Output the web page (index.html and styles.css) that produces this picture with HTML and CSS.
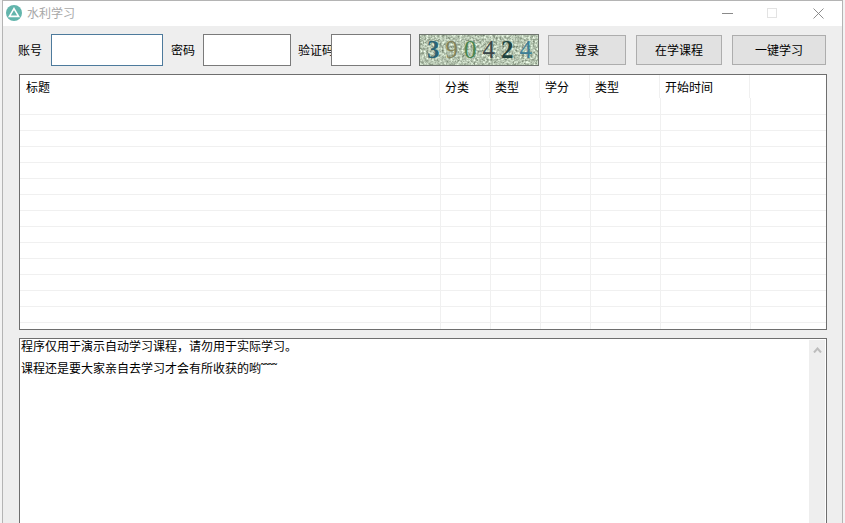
FILE: index.html
```html
<!DOCTYPE html>
<html lang="zh">
<head>
<meta charset="utf-8">
<title>水利学习</title>
<link rel="stylesheet" href="styles.css">
</head>
<body>
<div class="window">
  <header class="titlebar">
    <svg class="app-icon" width="16" height="16" viewBox="0 0 16 16"><circle cx="8" cy="8" r="8" fill="#62b5ac"/><path d="M8 3.6 L12.6 11.4 H3.4 Z" fill="none" stroke="#fff" stroke-width="1.6"/></svg>
    <span class="app-title">水利学习</span>
    <div class="controls">
      <svg class="ctl ctl-min" width="11" height="11" viewBox="0 0 11 11"><path d="M0 5.5H11" stroke="#8a8a8a"/></svg>
      <svg class="ctl ctl-max" width="11" height="11" viewBox="0 0 11 11"><rect x=".5" y=".5" width="9" height="9" fill="none" stroke="#e3e3e3"/></svg>
      <svg class="ctl ctl-close" width="11" height="11" viewBox="0 0 11 11"><path d="M.5 .5 10.5 10.5M10.5 .5 .5 10.5" stroke="#808080" stroke-width=".9"/></svg>
    </div>
  </header>
  <div class="toolbar">
    <label class="lbl lbl-account">账号</label>
    <input class="field field-account" type="text">
    <label class="lbl lbl-pass">密码</label>
    <input class="field field-pass" type="password">
    <label class="lbl lbl-code">验证码</label>
    <input class="field field-code" type="text">
    <div class="captcha">
      <svg class="noise" width="118" height="30"><filter id="n" x="0" y="0" width="100%" height="100%" color-interpolation-filters="sRGB"><feTurbulence type="fractalNoise" baseFrequency="0.45" numOctaves="3" seed="4"/><feColorMatrix values=".75 0 0 0 .34  .75 0 0 0 .4  .75 0 0 0 .32  0 0 0 0 1"/></filter><rect width="118" height="30" filter="url(#n)"/></svg>
      <span class="d d1">3</span><span class="d d2">9</span><span class="d d3">0</span><span class="d d4">4</span><span class="d d5">2</span><span class="d d6">4</span>
    </div>
    <button class="btn btn-login">登录</button>
    <button class="btn btn-course">在学课程</button>
    <button class="btn btn-study">一键学习</button>
  </div>
  <section class="grid-view">
    <div class="row head"><div>标题</div><div>分类</div><div>类型</div><div>学分</div><div>类型</div><div>开始时间</div><div></div></div>
    <div class="row first"><div></div><div></div><div></div><div></div><div></div><div></div><div></div></div>
    <div class="row"><div></div><div></div><div></div><div></div><div></div><div></div><div></div></div>
    <div class="row"><div></div><div></div><div></div><div></div><div></div><div></div><div></div></div>
    <div class="row"><div></div><div></div><div></div><div></div><div></div><div></div><div></div></div>
    <div class="row"><div></div><div></div><div></div><div></div><div></div><div></div><div></div></div>
    <div class="row"><div></div><div></div><div></div><div></div><div></div><div></div><div></div></div>
    <div class="row"><div></div><div></div><div></div><div></div><div></div><div></div><div></div></div>
    <div class="row"><div></div><div></div><div></div><div></div><div></div><div></div><div></div></div>
    <div class="row"><div></div><div></div><div></div><div></div><div></div><div></div><div></div></div>
    <div class="row"><div></div><div></div><div></div><div></div><div></div><div></div><div></div></div>
    <div class="row"><div></div><div></div><div></div><div></div><div></div><div></div><div></div></div>
    <div class="row"><div></div><div></div><div></div><div></div><div></div><div></div><div></div></div>
    <div class="row"><div></div><div></div><div></div><div></div><div></div><div></div><div></div></div>
    <div class="row"><div></div><div></div><div></div><div></div><div></div><div></div><div></div></div>
    <div class="row"><div></div><div></div><div></div><div></div><div></div><div></div><div></div></div>
  </section>
  <section class="log">
    <div class="log-text">
      <p>程序仅用于演示自动学习课程，请勿用于实际学习。</p>
      <p>课程还是要大家亲自去学习才会有所收获的哟<span class="tilde">˜˜˜˜</span></p>
    </div>
    <div class="scrollbar">
      <svg width="9" height="6" viewBox="0 0 9 6"><path d="M1 5.5 4.5 1.5 8 5.5" fill="none" stroke="#bdbdbd" stroke-width="2"/></svg>
    </div>
  </section>
</div>
</body>
</html>
```
FILE: styles.css
```css
* { box-sizing: border-box; }
html, body { margin: 0; height: 523px; overflow: hidden; }
body { background: #f3f3f3; font: 12px "Noto Sans CJK SC", "Liberation Sans", sans-serif; color: #000; }
.window { margin-left: 2px; width: 841px; height: 523px; background: #eeeeee; border: 1px solid #b4b4b4; border-width: 1px 1px 0 1px; overflow: hidden; }
.titlebar { height: 25px; background: #fff; display: flex; align-items: center; padding: 0 0 1px 3px; }
.app-icon { flex: none; }
.app-title { margin-left: 5px; color: #a8a8a8; line-height: 16px; }
.controls { margin-left: auto; display: flex; align-items: center; }
.ctl { display: block; }
.ctl-min { margin-right: 34px; }
.ctl-max { margin-right: 35px; }
.ctl-close { margin-right: 18px; }
.toolbar { height: 48px; display: flex; align-items: center; padding: 0 0 0 15px; }
.lbl { line-height: 16px; white-space: nowrap; }
.lbl-account { width: 24px; margin-right: 9px; }
.lbl-pass { width: 24px; margin: 0 8px; }
.lbl-code { width: 33px; margin: 0 0 0 7px; }
.field { height: 32px; background: #fff; border: 1px solid #7a7a7a; padding: 0; margin: 0; outline: 0; position: relative; }
.field-account { width: 112px; border-color: #4d7a9c; }
.field-pass { width: 88px; }
.field-code { width: 80px; }
.captcha { position: relative; width: 120px; height: 32px; margin-left: 8px; margin-right: 9px; border: 1px solid #6f756f; background: #c3d2c0; display: flex; align-items: center; padding-left: 7px; gap: 6.5px; font: 25px/30px "Liberation Serif", serif; overflow: hidden; }
.noise { position: absolute; left: 0; top: 0; }
.d { position: relative; width: 12px; text-align: center; }
.d1 { color: #2b6475; font-weight: bold; }
.d2 { color: #83835a; }
.d3 { color: #4a8550; }
.d4 { color: #3b464a; }
.d5 { color: #1f4440; font-weight: bold; }
.d6 { color: #3d7f97; }
.btn { height: 30px; margin: 0 0 1px; padding: 0; background: #e1e1e1; border: 1px solid #adadad; font: inherit; color: #000; }
.btn-login { width: 78px; }
.btn-course { width: 86px; margin-left: 10px; }
.btn-study { width: 94px; margin-left: 10px; }
.grid-view { margin-left: 16px; width: 808px; height: 256px; background: #fff; border: 1px solid #6e6e6e; overflow: hidden; }
.row { display: grid; grid-template-columns: 421px 50px 50px 50px 70px 90px 1fr; height: 16px; border-bottom: 1px solid #f0f0f0; }
.row > div { border-right: 1px solid #f0f0f0; }
.row > div:last-child { border-right: 0; }
.first { height: 17px; }
.head { grid-template-columns: 420px 50px 50px 50px 70px 90px 1fr; height: 23px; border-bottom: 0; line-height: 23px; }
.head > div { padding-left: 5px; }
.head > div:first-child { padding-left: 6px; }
.log { margin: 8px 0 0 16px; width: 808px; height: 200px; background: #fff; border: 1px solid #6e6e6e; display: flex; padding: 1px 1px 0 0; }
.log-text { flex: 1; margin-top: -1px; padding-left: 1px; }
.log-text p { margin: 0 0 8px; line-height: 14px; height: 14px; white-space: nowrap; }
.tilde { font-family: "Liberation Sans", sans-serif; }
.scrollbar { width: 16px; background: #eeeeee; display: flex; justify-content: center; align-items: flex-start; padding-top: 7px; }
.scrollbar svg { display: block; }
```
